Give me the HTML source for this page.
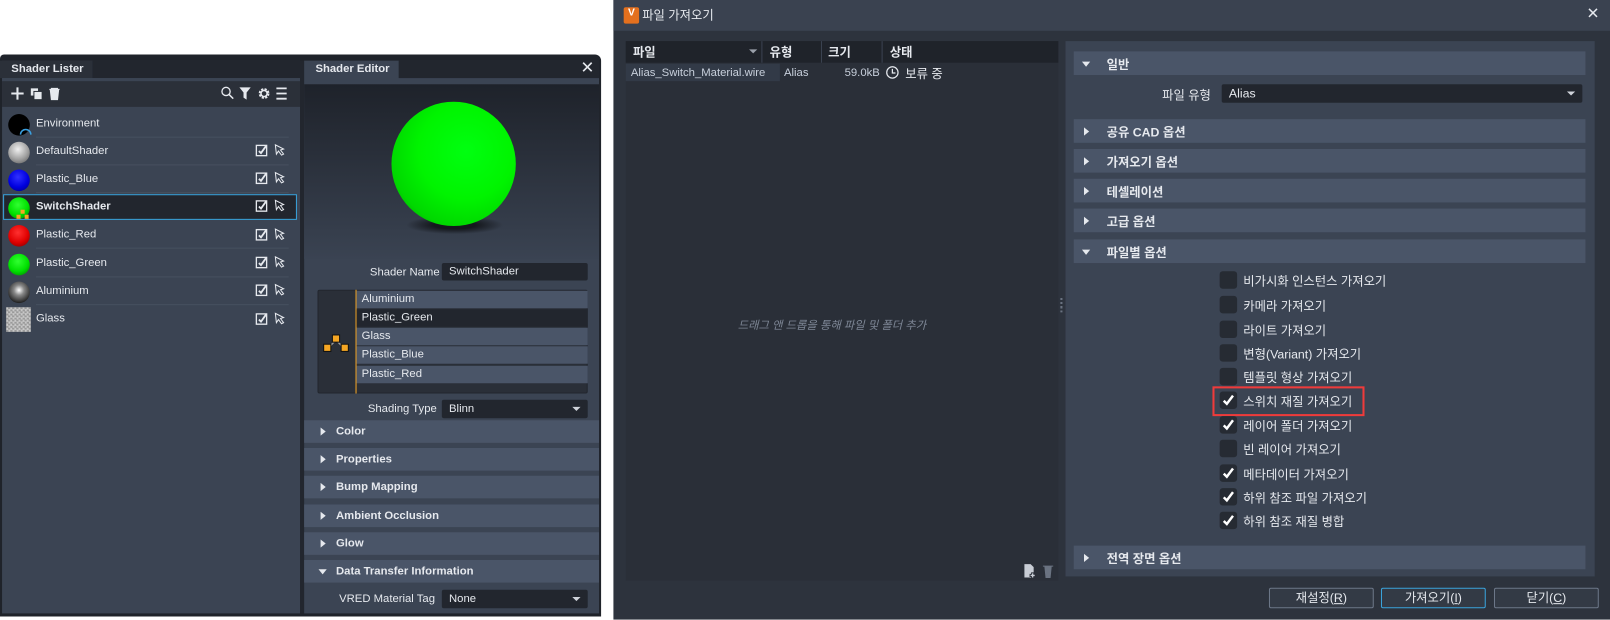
<!DOCTYPE html>
<html><head><meta charset="utf-8"><style>
*{box-sizing:border-box;margin:0;padding:0}
body{width:1610px;height:619px;background:#fff;overflow:hidden;font-family:"Liberation Sans","Noto Sans CJK KR",sans-serif;color:#e6e9ee}
#s{position:absolute;left:0;top:0;width:1567px;height:603px;transform:scale(1.0275);transform-origin:0 0}
.a{position:absolute}
.t{font-size:11px;white-space:nowrap}
.b{font-weight:bold}
.row{position:absolute;left:3px;width:286px;height:26px}
.row .sp{position:absolute;left:5px;top:3px;width:21px;height:21px;border-radius:50%}
.row .n{position:absolute;left:32px;top:6px;font-size:11px}
.row .ln{position:absolute;left:32px;right:8px;bottom:0;height:1px;background:#46505f}
.hd{position:absolute;left:296px;width:287px;height:22px;background:#4a5568;font-size:11px;font-weight:bold}
.hd span{position:absolute;left:31px;top:5px}
.tri{position:absolute;left:16px;top:7px;width:0;height:0;border-top:4px solid transparent;border-bottom:4px solid transparent;border-left:5px solid #e6e9ee}
.trd{position:absolute;left:14px;top:9px;width:0;height:0;border-left:4px solid transparent;border-right:4px solid transparent;border-top:5px solid #e6e9ee}
.fld{position:absolute;background:#22262e;border-radius:2px;font-size:11px}
.fld span{position:absolute;left:7px;top:3px}
.dd{position:absolute;right:7px;top:7px;border-left:4px solid transparent;border-right:4px solid transparent;border-top:4px solid #cfd3da}
.li{position:absolute;left:347px;width:225px;height:17px;background:#4a5568;font-size:11px}
.li span{position:absolute;left:5px;top:2px}
.oh{position:absolute;left:1045px;width:498px;height:23px;background:#4a5568;font-size:12px;font-weight:bold}
.oh span{position:absolute;left:32px;top:4px}
.oh .tri{left:10px;top:8px}
.oh .trd{left:8px;top:10px}
.cb{position:absolute;left:1187px;width:17px;height:17px;background:#262b33;border-radius:3px}
.cb svg{position:absolute;left:2px;top:2px}
.cl{position:absolute;left:1210px;font-size:12px;white-space:nowrap}
.btn{position:absolute;top:572px;width:102px;height:20px;border:1px solid #6c7788;border-radius:2px;font-size:12px;text-align:center;line-height:18px;background:#333a45}
</style></head><body><div id="s">

<div class="a" style="left:0;top:53px;width:585px;height:547px;background:#1f232a;border-radius:4px 6px 0 0"></div>
<div class="a" style="left:2px;top:59px;width:290px;height:538px;background:#3b4453"></div>
<div class="a" style="left:0;top:59px;width:90px;height:17px;background:#2b3039"></div>
<div class="a t b" style="left:11px;top:61px;">Shader Lister</div>
<div class="a" style="left:90px;top:59px;width:202px;height:17px;background:#22262e"></div>
<div class="a" style="left:2px;top:76px;width:290px;height:3px;background:#3b4453"></div>
<div class="a" style="left:2px;top:79px;width:290px;height:25px;background:#2b3039"></div>
<svg class="a" style="left:10px;top:84px" width="60" height="14"><path d="M7 1v12M1 7h12" stroke="#e6e9ee" stroke-width="2"/><rect x="20" y="2" width="7" height="7" fill="#e6e9ee"/><rect x="23" y="5" width="8" height="8" fill="#e6e9ee" stroke="#2b3039"/><path d="M38 3h10M40 3v-1h6v1M39 4h8l-1 9h-6z" fill="#e6e9ee" stroke="#e6e9ee"/></svg>
<svg class="a" style="left:215px;top:84px" width="70" height="14"><circle cx="5" cy="5" r="4" stroke="#e6e9ee" fill="none" stroke-width="1.3"/><path d="M8 8l4 4" stroke="#e6e9ee" stroke-width="1.5"/><path d="M18 1h11l-4 5v7l-3-2v-5z" fill="#e6e9ee"/><circle cx="42" cy="7" r="4" stroke="#e6e9ee" stroke-width="2.5" fill="none" stroke-dasharray="2 1.2"/><circle cx="42" cy="7" r="3" stroke="#e6e9ee" stroke-width="1.5" fill="none"/><path d="M54 2h10M54 7h10M54 12h10" stroke="#e6e9ee" stroke-width="1.8"/></svg>

<div class="row" style="top:108px"><div class="sp" style="background:#000;left:5px"></div><svg class="a" style="left:16px;top:14px" width="12" height="10"><path d="M1 9a5 5 0 0 1 10 0" stroke="#3aa0e0" fill="none" stroke-width="1.5"/></svg><div class="n">Environment</div><div class="ln"></div></div>
<div class="row" style="top:135px"><div class="sp" style="background:radial-gradient(circle at 45% 35%,#f0f0f0,#a0a0a0 55%,#505050)"></div><div class="n">DefaultShader</div><div class="ln"></div></div>
<div class="row" style="top:162px"><div class="sp" style="background:radial-gradient(circle at 45% 35%,#3030ff,#0000e0 55%,#000070)"></div><div class="n">Plastic_Blue</div><div class="ln"></div></div>
<div class="row" style="top:189px;background:#22262e;border:1px solid #3aa3dc;height:25px"><div class="sp" style="left:4px;top:2px;background:radial-gradient(circle at 45% 35%,#30ff30,#00e000 55%,#007000)"></div><svg class="a" style="left:12px;top:14px" width="12" height="10"><rect x="4" y="0" width="4" height="4" fill="#f5a623"/><rect x="0" y="5" width="4" height="4" fill="#f5a623"/><rect x="8" y="5" width="4" height="4" fill="#f5a623"/></svg><div class="n b" style="left:31px;top:5px">SwitchShader</div></div>
<div class="row" style="top:216px"><div class="sp" style="background:radial-gradient(circle at 45% 35%,#ff3030,#e00000 55%,#700000)"></div><div class="n">Plastic_Red</div><div class="ln"></div></div>
<div class="row" style="top:244px"><div class="sp" style="background:radial-gradient(circle at 45% 35%,#30ff30,#00e000 55%,#007000)"></div><div class="n">Plastic_Green</div><div class="ln"></div></div>
<div class="row" style="top:271px"><div class="sp" style="background:radial-gradient(circle at 50% 40%,#fff,#888 30%,#222 75%,#555)"></div><div class="n">Aluminium</div><div class="ln"></div></div>
<div class="row" style="top:298px"><div class="sp" style="border-radius:0;left:3px;width:24px;height:24px;top:1px;background:repeating-conic-gradient(#9a9a9a 0 25%,#c8c8c8 0 50%) 0 0/4px 4px"></div><div class="n">Glass</div></div>
<svg class="a" style="left:248px;top:140px" width="35" height="180">
<g id="ii"><rect x="1.5" y="1.5" width="10" height="10" fill="none" stroke="#e6e9ee" stroke-width="1.3"/><path d="M4 7l2 2 5-7" stroke="#e6e9ee" stroke-width="1.8" fill="none"/><path d="M20 1l8 4-3 1 3 4-2 1-3-4-2 3z" stroke="#e6e9ee" fill="none" stroke-width="1"/></g>
<use href="#ii" y="27"/><use href="#ii" y="54"/><use href="#ii" y="82"/><use href="#ii" y="109"/><use href="#ii" y="136"/><use href="#ii" y="164"/></svg>

<div class="a" style="left:292px;top:59px;width:4px;height:538px;background:#22262e"></div>
<div class="a" style="left:296px;top:59px;width:287px;height:538px;background:#3b4453"></div>
<div class="a" style="left:388px;top:59px;width:195px;height:17px;background:#22262e"></div>
<div class="a t b" style="left:307px;top:61px">Shader Editor</div>
<div class="a" style="left:565px;top:56px;font-size:16px;color:#e6e9ee">✕</div>
<div class="a" style="left:296px;top:82px;width:287px;height:170px;background:linear-gradient(#1e222a,#3a4352)"></div>
<div class="a" style="left:395px;top:210px;width:95px;height:18px;border-radius:50%;background:radial-gradient(ellipse,#15181d 30%,rgba(30,34,42,0) 70%)"></div>
<div class="a" style="left:381px;top:99px;width:121px;height:121px;border-radius:50%;background:radial-gradient(circle at 60% 40%,#00ff10 0,#00f400 45%,#00d800 72%,#009a00 90%,#005a00 100%)"></div>
<div class="a t" style="left:360px;top:259px">Shader Name</div>
<div class="fld" style="left:430px;top:256px;width:142px;height:17px"><span style="top:2px">SwitchShader</span></div>
<div class="a" style="left:309px;top:282px;width:263px;height:101px;background:#2a2f38;border:1px solid #22262e;border-radius:2px"></div>
<div class="a" style="left:346px;top:282px;width:1px;height:101px;background:#f5a623"></div>
<svg class="a" style="left:314px;top:325px" width="26" height="20"><path d="M13 6l-6 6M13 6l6 6" stroke="#999" stroke-width="1.5"/><rect x="9.5" y="1" width="7" height="7" fill="#f5a623" stroke="#111"/><rect x="1" y="10" width="7" height="7" fill="#f5a623" stroke="#111"/><rect x="18" y="10" width="7" height="7" fill="#f5a623" stroke="#111"/></svg>
<div class="li" style="top:283px"><span>Aluminium</span></div>
<div class="li" style="top:301px;background:#22262e"><span>Plastic_Green</span></div>
<div class="li" style="top:319px"><span>Glass</span></div>
<div class="li" style="top:337px"><span>Plastic_Blue</span></div>
<div class="li" style="top:356px"><span>Plastic_Red</span></div>
<div class="a t" style="left:358px;top:392px">Shading Type</div>
<div class="fld" style="left:430px;top:389px;width:142px;height:18px"><span>Blinn</span><i class="dd"></i></div>
<div class="hd" style="top:409px"><i class="tri"></i><span>Color</span></div>
<div class="hd" style="top:436px"><i class="tri"></i><span>Properties</span></div>
<div class="hd" style="top:463px"><i class="tri"></i><span>Bump Mapping</span></div>
<div class="hd" style="top:491px"><i class="tri"></i><span>Ambient Occlusion</span></div>
<div class="hd" style="top:518px"><i class="tri"></i><span>Glow</span></div>
<div class="hd" style="top:545px"><i class="trd"></i><span>Data Transfer Information</span></div>
<div class="a t" style="left:330px;top:577px">VRED Material Tag</div>
<div class="fld" style="left:430px;top:574px;width:142px;height:18px"><span>None</span><i class="dd"></i></div>

<div class="a" style="left:597px;top:0;width:970px;height:603px;background:#2d333d"></div>
<div class="a" style="left:597px;top:0;width:970px;height:30px;background:#3a4250"></div>
<div class="a" style="left:607px;top:7px;width:15px;height:16px;background:#e4701e;border-radius:2px;font-size:10px;font-weight:bold;color:#fff;text-align:center;line-height:12px">V</div>
<div class="a" style="left:625px;top:6px;font-size:12px">파일 가져오기</div>
<div class="a" style="left:1544px;top:4px;font-size:15px">✕</div>
<div class="a" style="left:609px;top:40px;width:421px;height:525px;background:#2a2f38"></div>
<div class="a" style="left:609px;top:40px;width:421px;height:21px;background:#1f232a"></div>
<div class="a" style="left:741px;top:40px;width:1px;height:21px;background:#3a4250"></div>
<div class="a" style="left:799px;top:40px;width:1px;height:21px;background:#3a4250"></div>
<div class="a" style="left:858px;top:40px;width:1px;height:21px;background:#3a4250"></div>
<div class="a b" style="left:616px;top:42px;font-size:12px">파일</div>
<div class="a" style="left:729px;top:48px;border-left:4px solid transparent;border-right:4px solid transparent;border-top:4px solid #9aa0aa"></div>
<div class="a b" style="left:749px;top:42px;font-size:12px">유형</div>
<div class="a b" style="left:806px;top:42px;font-size:12px">크기</div>
<div class="a b" style="left:866px;top:42px;font-size:12px">상태</div>
<div class="a" style="left:609px;top:62px;width:150px;height:17px;background:#323a47"></div>
<div class="a t" style="left:614px;top:65px;color:#c8d0dc">Alias_Switch_Material.wire</div>
<div class="a t" style="left:763px;top:65px;color:#c8d0dc">Alias</div>
<div class="a t" style="left:822px;top:65px;color:#c8d0dc">59.0kB</div>
<svg class="a" style="left:862px;top:64px" width="13" height="13"><circle cx="6.5" cy="6.5" r="5.5" stroke="#e6e9ee" fill="none" stroke-width="1.2"/><path d="M6.5 3v4h3" stroke="#e6e9ee" fill="none" stroke-width="1.2"/></svg>
<div class="a" style="left:881px;top:63px;font-size:12px">보류 중</div>
<div class="a" style="left:718px;top:308px;font-size:11px;color:#7e8796;font-style:italic">드래그 앤 드롭을 통해 파일 및 폴더 추가</div>
<svg class="a" style="left:996px;top:548px" width="34" height="16"><path d="M1 1h6l3 3v10H1z" fill="#c8cdd5"/><path d="M9 9v6M6 12h6" stroke="#2a2f38" stroke-width="3"/><path d="M9 10v4M7 12h4" stroke="#c8cdd5" stroke-width="1.3"/><path d="M19 3h10M21 4h6l-1 10h-4z" fill="#6a7381" stroke="#6a7381"/></svg>
<div class="a" style="left:1032px;top:290px;width:2px;height:14px;background:repeating-linear-gradient(#6a7381 0 2px,transparent 2px 4px)"></div>
<div class="a" style="left:1037px;top:40px;width:515px;height:521px;background:#3b4453"></div>
<div class="oh" style="top:50px"><i class="trd"></i><span>일반</span></div>
<div class="a" style="left:1131px;top:84px;font-size:12px">파일 유형</div>
<div class="fld" style="left:1189px;top:82px;width:351px;height:18px"><span style="font-size:12px;top:2px">Alias</span><i class="dd"></i></div>
<div class="oh" style="top:116px"><i class="tri"></i><span>공유 CAD 옵션</span></div>
<div class="oh" style="top:145px"><i class="tri"></i><span>가져오기 옵션</span></div>
<div class="oh" style="top:174px"><i class="tri"></i><span>테셀레이션</span></div>
<div class="oh" style="top:203px"><i class="tri"></i><span>고급 옵션</span></div>
<div class="oh" style="top:233px"><i class="trd"></i><span>파일별 옵션</span></div>

<div class="cb" style="top:264px"></div><div class="cl" style="top:265px">비가시화 인스턴스 가져오기</div>
<div class="cb" style="top:288px"></div><div class="cl" style="top:289px">카메라 가져오기</div>
<div class="cb" style="top:312px"></div><div class="cl" style="top:313px">라이트 가져오기</div>
<div class="cb" style="top:335px"></div><div class="cl" style="top:336px">변형(Variant) 가져오기</div>
<div class="cb" style="top:358px"></div><div class="cl" style="top:359px">템플릿 형상 가져오기</div>
<div class="cb" style="top:381px"><svg width="13" height="13"><path d="M2 7l3 3 6-8" stroke="#fff" stroke-width="2.4" fill="none"/></svg></div><div class="cl" style="top:382px">스위치 재질 가져오기</div>
<div class="a" style="left:1180px;top:376px;width:148px;height:29px;border:2px solid #ef3b3b"></div>
<div class="cb" style="top:405px"><svg width="13" height="13"><path d="M2 7l3 3 6-8" stroke="#fff" stroke-width="2.4" fill="none"/></svg></div><div class="cl" style="top:406px">레이어 폴더 가져오기</div>
<div class="cb" style="top:428px"></div><div class="cl" style="top:429px">빈 레이어 가져오기</div>
<div class="cb" style="top:452px"><svg width="13" height="13"><path d="M2 7l3 3 6-8" stroke="#fff" stroke-width="2.4" fill="none"/></svg></div><div class="cl" style="top:453px">메타데이터 가져오기</div>
<div class="cb" style="top:475px"><svg width="13" height="13"><path d="M2 7l3 3 6-8" stroke="#fff" stroke-width="2.4" fill="none"/></svg></div><div class="cl" style="top:476px">하위 참조 파일 가져오기</div>
<div class="cb" style="top:498px"><svg width="13" height="13"><path d="M2 7l3 3 6-8" stroke="#fff" stroke-width="2.4" fill="none"/></svg></div><div class="cl" style="top:499px">하위 참조 재질 병합</div>
<div class="oh" style="top:531px"><i class="tri"></i><span>전역 장면 옵션</span></div>

<div class="btn" style="left:1235px">재설정(<u>R</u>)</div>
<div class="btn" style="left:1344px;border-color:#3aa3dc">가져오기(<u>I</u>)</div>
<div class="btn" style="left:1454px">닫기(<u>C</u>)</div>
</div></body></html>
